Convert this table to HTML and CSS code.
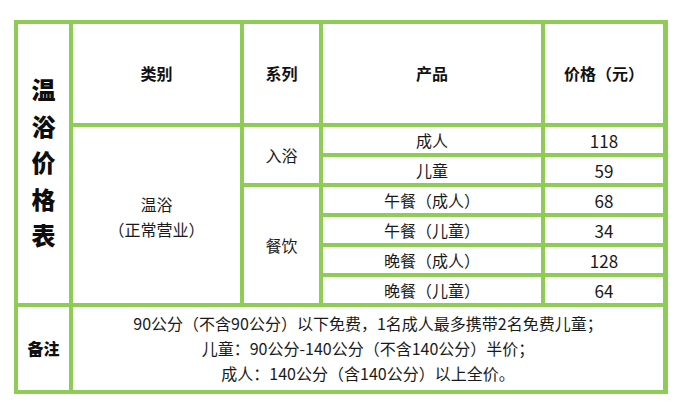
FILE: index.html
```html
<!DOCTYPE html>
<html lang="zh">
<head>
<meta charset="utf-8">
<link rel="stylesheet" href="styles.css">
</head>
<body>
<div class="sheet">
  <div class="cell title"><span class="title-text">温浴价格表</span></div>
  <div class="cell head c2">类别</div>
  <div class="cell head c3">系列</div>
  <div class="cell head c4">产品</div>
  <div class="cell head c5">价格（元）</div>

  <div class="cell category">温浴<br>（正常营业）</div>
  <div class="cell series-bath">入浴</div>
  <div class="cell series-food">餐饮</div>

  <div class="cell prod r2">成人</div><div class="cell price r2">118</div>
  <div class="cell prod r3">儿童</div><div class="cell price r3">59</div>
  <div class="cell prod r4">午餐（成人）</div><div class="cell price r4">68</div>
  <div class="cell prod r5">午餐（儿童）</div><div class="cell price r5">34</div>
  <div class="cell prod r6">晚餐（成人）</div><div class="cell price r6">128</div>
  <div class="cell prod r7">晚餐（儿童）</div><div class="cell price r7">64</div>

  <div class="cell note-label">备注</div>
  <div class="cell notes">90公分（不含90公分）以下免费，1名成人最多携带2名免费儿童；<br>儿童：90公分-140公分（不含140公分）半价；<br>成人：140公分（含140公分）以上全价。</div>
</div>
</body>
</html>
```
FILE: styles.css
```css
html, body {
  margin: 0;
  padding: 0;
  background: #ffffff;
}
body {
  padding: 20px 0 0 14px;
  font-family: "Noto Sans CJK SC", "Noto Sans", sans-serif;
  color: #1a1a1a;
}
.sheet {
  display: grid;
  width: 645px;
  grid-template-columns: 51px 167px 75px 218px 118px;
  grid-template-rows: 99px 26px 26px 26px 26px 26px 26px 83px;
  gap: 4px;
  padding: 4px 5px 4px 4px;
  background: #8fcc55;
}
.cell {
  background: #ffffff;
  display: flex;
  align-items: center;
  justify-content: center;
  text-align: center;
  font-size: 16px;
  line-height: 25px;
}
.title {
  grid-column: 1;
  grid-row: 1 / 8;
  padding-bottom: 2px;
}
.title-text {
  display: block;
  width: 1em;
  font-size: 24px;
  font-weight: 900;
  line-height: 36.5px;
  color: #0d0d0d;
}
.head {
  grid-row: 1;
  font-weight: 700;
  font-size: 16px;
  color: #111;
}
.c2 { grid-column: 2; }
.c3 { grid-column: 3; }
.c4 { grid-column: 4; }
.c5 { grid-column: 5; }
.category {
  grid-column: 2;
  grid-row: 2 / 8;
  padding-top: 3px;
}
.series-bath {
  grid-column: 3;
  grid-row: 2 / 4;
}
.series-food {
  grid-column: 3;
  grid-row: 4 / 8;
}
.prod { grid-column: 4; }
.price { grid-column: 5; font-size: 17px; }
.r2 { grid-row: 2; }
.r3 { grid-row: 3; }
.r4 { grid-row: 4; }
.r5 { grid-row: 5; }
.r6 { grid-row: 6; }
.r7 { grid-row: 7; }
.note-label {
  grid-column: 1;
  grid-row: 8;
  font-weight: 900;
  font-size: 16px;
  color: #111;
}
.notes {
  grid-column: 2 / 6;
  grid-row: 8;
  font-size: 16px;
  line-height: 25px;
}
```
